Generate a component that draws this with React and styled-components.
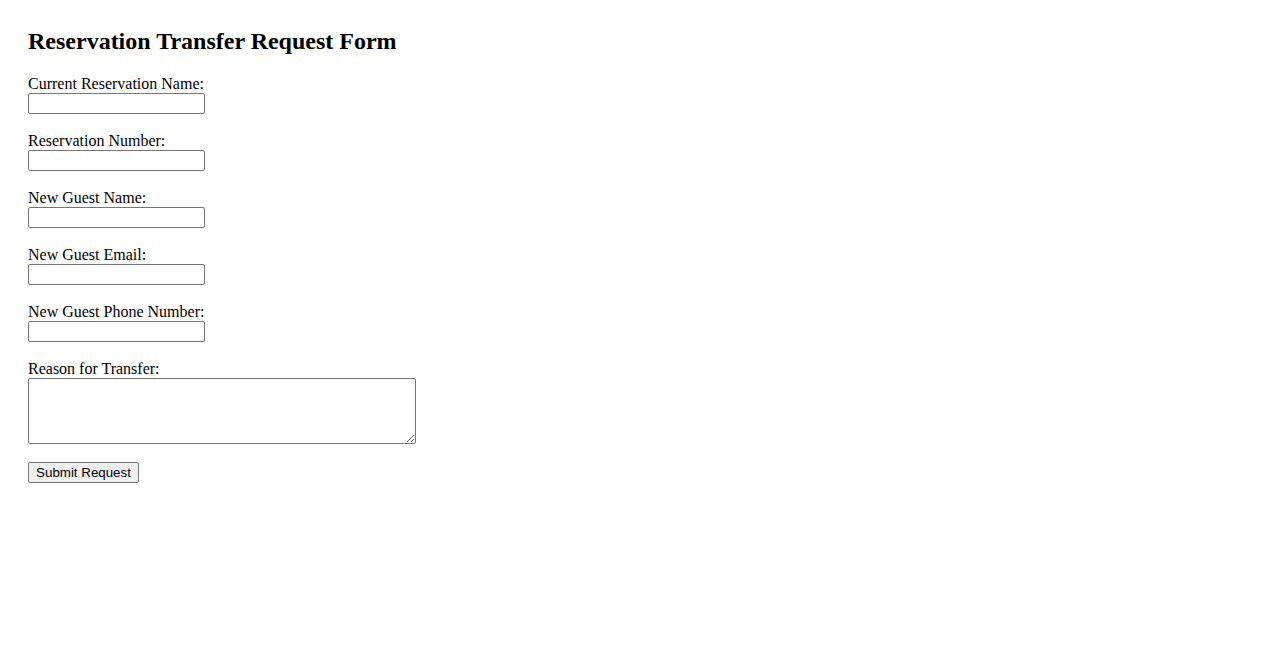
import React from "react";
import styled, { createGlobalStyle } from "styled-components";

const GlobalStyle = createGlobalStyle`
  body {
    margin: 0;
    background: #fff;
    font-family: "Liberation Serif", "Times New Roman", serif;
    color: #000;
  }
`;

const Page = styled.div`
  padding: 27px 28px;
`;

const Title = styled.h2`
  font-size: 24px;
  font-weight: bold;
  line-height: 28px;
  margin: 0 0 19px;
`;

const Form = styled.form`
  display: flex;
  flex-direction: column;
  align-items: flex-start;
`;

const Field = styled.div`
  display: flex;
  flex-direction: column;
  align-items: flex-start;
  margin-bottom: 17px;
`;

const Label = styled.label`
  font-size: 16px;
  line-height: 19px;
`;

const TextInput = styled.input`
  box-sizing: border-box;
  width: 177px;
  height: 21px;
  padding: 1px 2px;
  border: 1px solid #767676;
  border-radius: 2px;
  font-family: "Liberation Sans", Arial, sans-serif;
  font-size: 13.33px;
  background: #fff;
`;

const TextArea = styled.textarea`
  box-sizing: border-box;
  width: 388px;
  height: 66px;
  padding: 2px;
  border: 1px solid #767676;
  border-radius: 2px;
  font-family: "Liberation Mono", monospace;
  font-size: 13.33px;
`;

const SubmitButton = styled.button`
  box-sizing: border-box;
  height: 21px;
  width: 111px;
  padding: 1px 6px;
  border: 1px solid #767676;
  border-radius: 2px;
  background: #efefef;
  font-family: "Liberation Sans", Arial, sans-serif;
  font-size: 13.33px;
  color: #000;
  margin-top: 1px;
`;

const fields = [
  { id: "currentName", label: "Current Reservation Name:" },
  { id: "reservationNumber", label: "Reservation Number:" },
  { id: "newName", label: "New Guest Name:" },
  { id: "newEmail", label: "New Guest Email:", type: "email" },
  { id: "newPhone", label: "New Guest Phone Number:", type: "tel" },
];

export default function App() {
  return (
    <>
      <GlobalStyle />
      <Page>
        <Title>Reservation Transfer Request Form</Title>
        <Form onSubmit={(e) => e.preventDefault()}>
          {fields.map((f) => (
            <Field key={f.id}>
              <Label htmlFor={f.id}>{f.label}</Label>
              <TextInput id={f.id} type={f.type || "text"} />
            </Field>
          ))}
          <Field>
            <Label htmlFor="reason">Reason for Transfer:</Label>
            <TextArea id="reason" />
          </Field>
          <SubmitButton type="submit">Submit Request</SubmitButton>
        </Form>
      </Page>
    </>
  );
}
